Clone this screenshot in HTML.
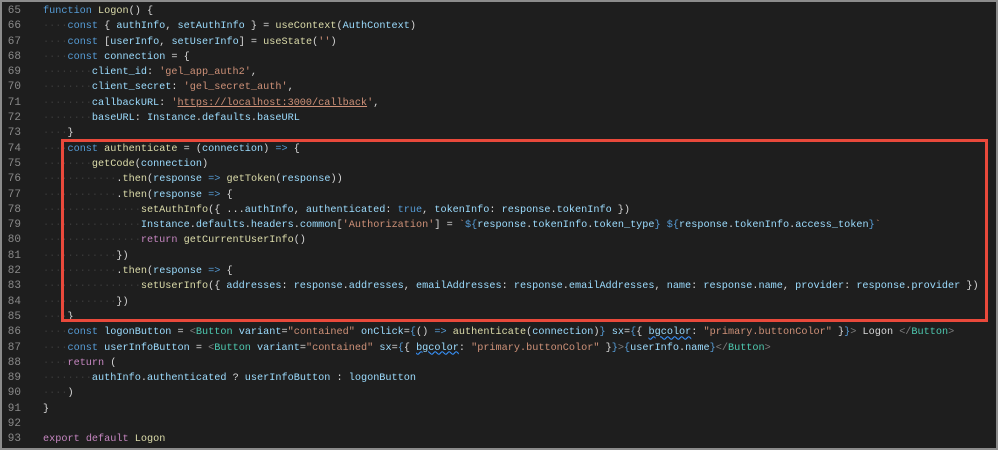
<!DOCTYPE html>
<html><head><meta charset="utf-8"><style>
html,body{margin:0;padding:0;}
body{width:998px;height:450px;background:#1e1e1e;position:relative;overflow:hidden;}
.frame{position:absolute;left:0;top:0;width:994px;height:446px;border:2px solid #8c8c8c;}
.ln{position:absolute;left:0;top:4px;width:21px;text-align:right;color:#8a8a8a;font-size:11px;}
.code{position:absolute;left:43px;top:4px;color:#d8d8d8;}
pre{margin:0;font-family:"Liberation Mono",monospace;font-size:10.2px;line-height:15.29px;}
i{font-style:normal;color:#3a3a3a;}
.k{color:#569cd6}.f{color:#dcdcaa}.v{color:#9cdcfe}.s{color:#ce9178}.p{color:#c586c0}.t{color:#4ec9b0}.g{color:#808080}
.u{text-decoration:underline;text-decoration-color:#ce9178}
.w{text-decoration:underline wavy #3794ff;}
.box{position:absolute;left:61px;top:139px;width:921px;height:177px;border:3px solid #e9493b;}
</style></head><body>
<div class="frame"></div>
<pre class="ln">65
66
67
68
69
70
71
72
73
74
75
76
77
78
79
80
81
82
83
84
85
86
87
88
89
90
91
92
93</pre>
<pre class="code"><span class="k">function</span> <span class="f">Logon</span>() {
<i>····</i><span class="k">const</span> { <span class="v">authInfo</span>, <span class="v">setAuthInfo</span> } = <span class="f">useContext</span>(<span class="v">AuthContext</span>)
<i>····</i><span class="k">const</span> [<span class="v">userInfo</span>, <span class="v">setUserInfo</span>] = <span class="f">useState</span>(<span class="s">''</span>)
<i>····</i><span class="k">const</span> <span class="v">connection</span> = {
<i>········</i><span class="v">client_id</span>: <span class="s">'gel_app_auth2'</span>,
<i>········</i><span class="v">client_secret</span>: <span class="s">'gel_secret_auth'</span>,
<i>········</i><span class="v">callbackURL</span>: <span class="s">'<span class="u">https://localhost:3000/callback</span>'</span>,
<i>········</i><span class="v">baseURL</span>: <span class="v">Instance</span>.<span class="v">defaults</span>.<span class="v">baseURL</span>
<i>····</i>}
<i>····</i><span class="k">const</span> <span class="f">authenticate</span> = (<span class="v">connection</span>) <span class="k">=&gt;</span> {
<i>········</i><span class="f">getCode</span>(<span class="v">connection</span>)
<i>············</i>.<span class="f">then</span>(<span class="v">response</span> <span class="k">=&gt;</span> <span class="f">getToken</span>(<span class="v">response</span>))
<i>············</i>.<span class="f">then</span>(<span class="v">response</span> <span class="k">=&gt;</span> {
<i>················</i><span class="f">setAuthInfo</span>({ ...<span class="v">authInfo</span>, <span class="v">authenticated</span>: <span class="k">true</span>, <span class="v">tokenInfo</span>: <span class="v">response</span>.<span class="v">tokenInfo</span> })
<i>················</i><span class="v">Instance</span>.<span class="v">defaults</span>.<span class="v">headers</span>.<span class="v">common</span>[<span class="s">'Authorization'</span>] = <span class="s">`</span><span class="k">${</span><span class="v">response</span>.<span class="v">tokenInfo</span>.<span class="v">token_type</span><span class="k">}</span><span class="s"> </span><span class="k">${</span><span class="v">response</span>.<span class="v">tokenInfo</span>.<span class="v">access_token</span><span class="k">}</span><span class="s">`</span>
<i>················</i><span class="p">return</span> <span class="f">getCurrentUserInfo</span>()
<i>············</i>})
<i>············</i>.<span class="f">then</span>(<span class="v">response</span> <span class="k">=&gt;</span> {
<i>················</i><span class="f">setUserInfo</span>({ <span class="v">addresses</span>: <span class="v">response</span>.<span class="v">addresses</span>, <span class="v">emailAddresses</span>: <span class="v">response</span>.<span class="v">emailAddresses</span>, <span class="v">name</span>: <span class="v">response</span>.<span class="v">name</span>, <span class="v">provider</span>: <span class="v">response</span>.<span class="v">provider</span> })
<i>············</i>})
<i>····</i>}
<i>····</i><span class="k">const</span> <span class="v">logonButton</span> = <span class="g">&lt;</span><span class="t">Button</span> <span class="v">variant</span>=<span class="s">"contained"</span> <span class="v">onClick</span>=<span class="k">{</span>() <span class="k">=&gt;</span> <span class="f">authenticate</span>(<span class="v">connection</span>)<span class="k">}</span> <span class="v">sx</span>=<span class="k">{</span>{ <span class="v w">bgcolor</span>: <span class="s">"primary.buttonColor"</span> }<span class="k">}</span><span class="g">&gt;</span> Logon <span class="g">&lt;/</span><span class="t">Button</span><span class="g">&gt;</span>
<i>····</i><span class="k">const</span> <span class="v">userInfoButton</span> = <span class="g">&lt;</span><span class="t">Button</span> <span class="v">variant</span>=<span class="s">"contained"</span> <span class="v">sx</span>=<span class="k">{</span>{ <span class="v w">bgcolor</span>: <span class="s">"primary.buttonColor"</span> }<span class="k">}</span><span class="g">&gt;</span><span class="k">{</span><span class="v">userInfo</span>.<span class="v">name</span><span class="k">}</span><span class="g">&lt;/</span><span class="t">Button</span><span class="g">&gt;</span>
<i>····</i><span class="p">return</span> (
<i>········</i><span class="v">authInfo</span>.<span class="v">authenticated</span> ? <span class="v">userInfoButton</span> : <span class="v">logonButton</span>
<i>····</i>)
}

<span class="p">export</span> <span class="p">default</span> <span class="f">Logon</span></pre>
<div class="box"></div>
</body></html>
